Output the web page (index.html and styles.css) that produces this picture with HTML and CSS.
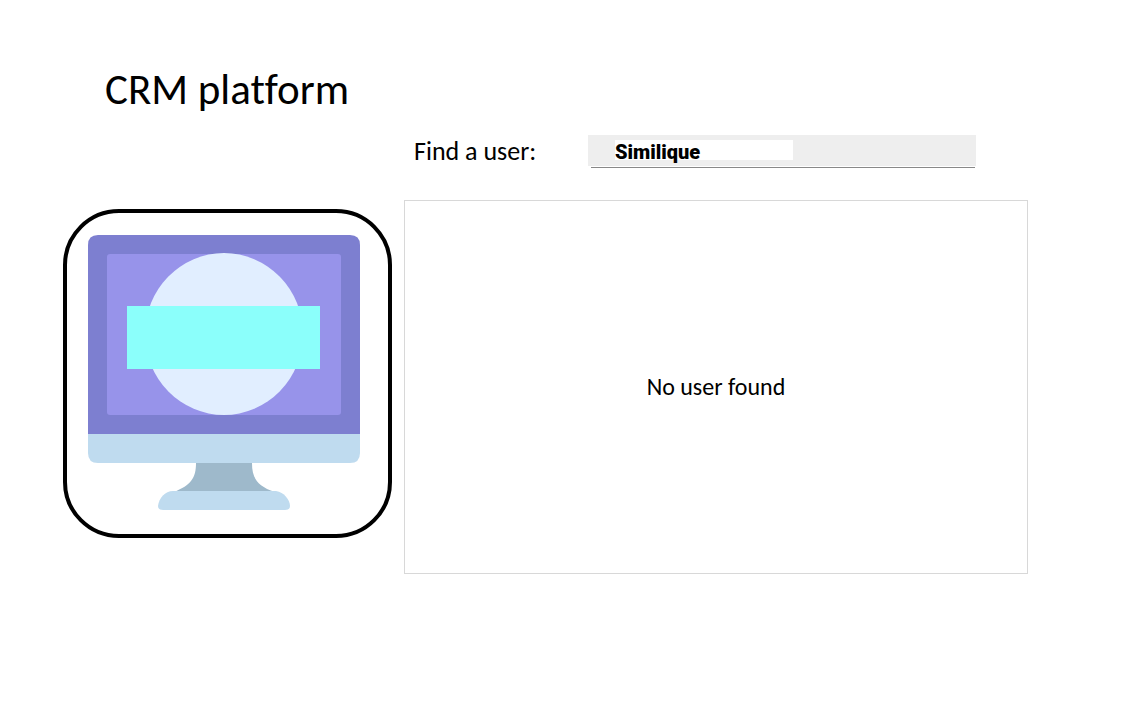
FILE: index.html
```html
<!DOCTYPE html>
<html lang="en">
<head>
<meta charset="utf-8">
<meta name="viewport" content="width=device-width, initial-scale=1">
<title>CRM platform</title>
<link rel="stylesheet" href="styles.css">
</head>
<body>
<main class="page">
  <h1 class="title">CRM platform</h1>
  <div class="content">
    <div class="logo">
      <svg class="monitor" viewBox="0 0 329 329" aria-hidden="true">
        <path fill="#7d7fd0" d="M25 225V36q0-10 10-10H287q10 0 10 10V225z"/>
        <rect x="44" y="45" width="234" height="161" rx="3" fill="#9793ea"/>
        <ellipse cx="161" cy="125" rx="79" ry="81" fill="#e1eeff"/>
        <rect x="64" y="97" width="193" height="63" fill="#8bfffb"/>
        <path fill="#bfdbef" d="M25 225H297V244q0 10-10 10H35q-10 0-10-10z"/>
        <path fill="#9eb9cb" d="M133 254H189C189 269 194 277 212 283H111C128 276 133 269 133 254z"/>
        <path fill="#bfdbef" d="M110 282H213C221 283 227 291 227 297Q227 301 222 301H100Q95 301 95 297C96 289 102 282 110 282z"/>
      </svg>
    </div>
    <div class="workspace">
      <form class="search">
        <label class="search-label" for="user-search">Find a user:</label>
        <div class="field">
          <div class="field-box">
            <input class="field-input" id="user-search" type="text" value="Similique">
          </div>
        </div>
      </form>
      <section class="results">
        <p class="empty">No user found</p>
      </section>
    </div>
  </div>
</main>
</body>
</html>
```
FILE: styles.css
```css
* {
  box-sizing: border-box;
}

body {
  margin: 0;
  background: #fff;
  color: #000;
  font-family: Carlito, Calibri, Lato, sans-serif;
  font-variant-ligatures: none;
}

.page {
  padding: 64px 102px 64px 63px;
}

.title {
  margin: 0 0 19px 42px;
  font-size: 43px;
  font-weight: 400;
  line-height: 52px;
}

.content {
  display: grid;
  grid-template-columns: 329px 1fr;
  gap: 12px;
}

.logo {
  position: relative;
  align-self: start;
  margin-top: 74px;
}

.monitor {
  display: block;
  width: 100%;
}

.logo::after {
  content: "";
  position: absolute;
  inset: 0;
  border: 4px solid #000;
  border-radius: 56px;
}

.search {
  display: grid;
  grid-template-columns: 174px 1fr;
  align-items: start;
  padding: 0 52px 0 10px;
}

.search-label {
  font-size: 26px;
  line-height: 32px;
}

.field-box {
  padding: 5px 27px 2px;
  background: #eee;
}

.field::after {
  content: "";
  display: block;
  margin: 1px 1px 0 3px;
  border-bottom: 1px solid #888;
}

.field-input {
  display: block;
  width: 178px;
  max-width: 100%;
  height: 24px;
  padding: 0;
  border: 0;
  outline: 0;
  background: linear-gradient(#fff, #fff) top / 100% 20px no-repeat;
  color: #000;
  font: 900 20px/24px Roboto, sans-serif;
}

.results {
  display: grid;
  place-items: center;
  min-height: 374px;
  margin-top: 32px;
  border: 1px solid #d8d8d8;
}

.empty {
  margin: 0;
  font-size: 24px;
  line-height: 28px;
}
```
